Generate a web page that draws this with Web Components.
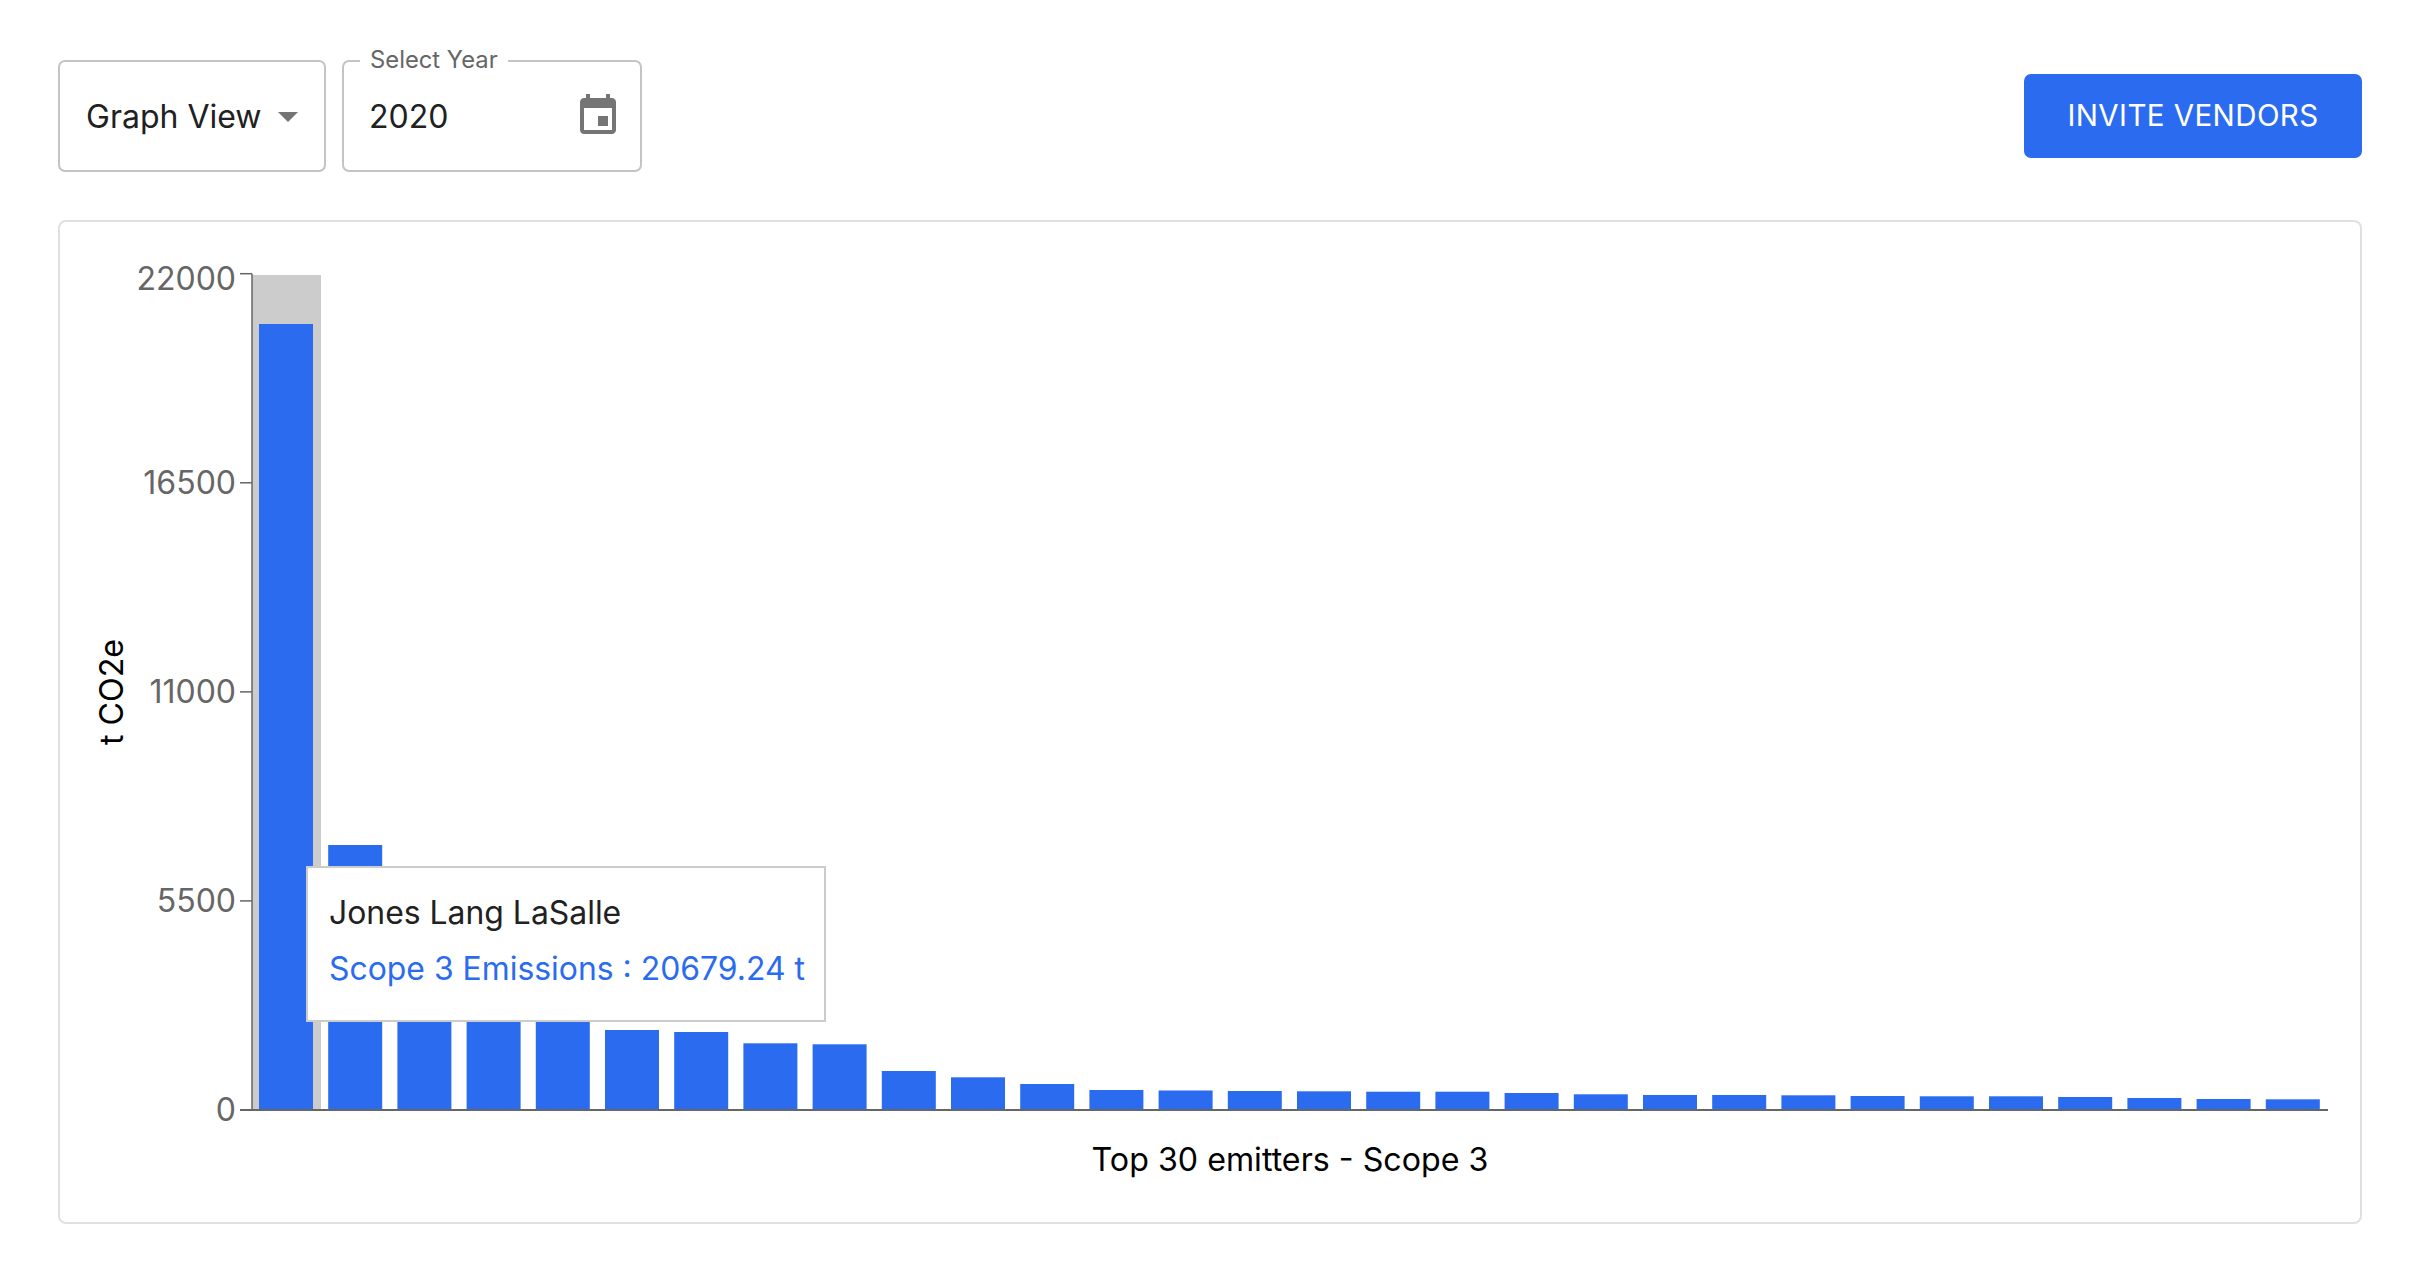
<!DOCTYPE html>
<html>
<head>
<meta charset="utf-8">
<title>Top 30 emitters</title>
<style>
  html, body { margin: 0; background: #fff; }
  body { font-family: "Inter", "Liberation Sans", sans-serif; color: #212121; }
</style>
</head>
<body>
<emitters-page></emitters-page>

<script>
class SelectField extends HTMLElement {
    constructor() {
        super();
        this.attachShadow({ mode: "open" });
    }

    connectedCallback() {
        this.shadowRoot.innerHTML = `
        <style>
            :host { display: block; width: 268px; height: 112px; box-sizing: border-box;
                border: 2px solid #c4c4c4; border-radius: 7px; }
            .row { height: 100%; display: flex; align-items: center; padding: 0 12px 0 26px; }
            .value { flex: 1; font-size: 32px; color: #212121; }
            svg { width: 48px; height: 48px; fill: #757575; display: block; }
        </style>
        <div class="row">
            <span class="value"><slot></slot></span>
            <svg viewBox="0 0 24 24"><path d="M7 10l5 5 5-5z"/></svg>
        </div>
        `;
    }
}

class DateField extends HTMLElement {
    constructor() {
        super();
        this.attachShadow({ mode: "open" });
    }

    connectedCallback() {
        const label = this.getAttribute("label");
        this.shadowRoot.innerHTML = `
        <style>
            :host { display: block; position: relative; width: 300px; height: 112px; box-sizing: border-box;
                border: 2px solid #c4c4c4; border-radius: 7px; }
            .label { position: absolute; left: 16px; top: -16px; padding: 0 10px; background: #fff;
                font-size: 23.8px; line-height: 28px; color: #666; white-space: nowrap; }
            .row { height: 100%; display: flex; align-items: center; padding: 0 18px 0 25px; }
            .value { flex: 1; font-size: 32px; color: #212121; }
            svg { width: 48px; height: 48px; fill: #757575; display: block; }
        </style>
        <span class="label">${label}</span>
        <div class="row">
            <span class="value"><slot></slot></span>
            <svg viewBox="0 0 24 24"><path d="M17 12h-5v5h5v-5zM16 1v2H8V1H6v2H5c-1.11 0-1.99.9-1.99 2L3 19c0 1.1.89 2 2 2h14c1.1 0 2-.9 2-2V5c0-1.1-.9-2-2-2h-1V1h-2zm3 18H5V8h14v11z"/></svg>
        </div>
        `;
    }
}

class ActionButton extends HTMLElement {
    constructor() {
        super();
        this.attachShadow({ mode: "open" });
    }

    connectedCallback() {
        this.shadowRoot.innerHTML = `
        <style>
            :host { display: flex; align-items: center; justify-content: center; width: 338px; height: 84px;
                background: #2b6bef; border-radius: 7px; color: #fff; font-size: 29.5px; letter-spacing: 0.4px; }
            span { position: relative; top: -1px; }
        </style>
        <span><slot></slot></span>
        `;
    }
}

class ChartTooltip extends HTMLElement {
    constructor() {
        super();
        this.attachShadow({ mode: "open" });
    }

    connectedCallback() {
        const name = this.getAttribute("name");
        const value = this.getAttribute("value");
        this.shadowRoot.innerHTML = `
        <style>
            :host { position: absolute; left: 246px; top: 644px; width: 520px; height: 156px; box-sizing: border-box;
                display: flex; flex-direction: column; gap: 20px;
                padding: 27px 21px 0; background: #fff; border: 2px solid #ccc; font-size: 31.9px; line-height: 36px; }
            .name { color: #212121; }
            .value { color: #2b6bef; white-space: nowrap; }
        </style>
        <div class="name">${name}</div>
        <div class="value">${value}</div>
        `;
    }
}

class BarChart extends HTMLElement {
    constructor() {
        super();
        this.attachShadow({ mode: "open" });
    }

    connectedCallback() {
        // tops of the 30 bars, in page pixels
        const tops = [324, 845, 965, 990, 1012, 1030, 1032, 1043.3, 1044.3, 1071, 1077.3, 1084, 1090, 1090.5, 1091,
            1091.3, 1091.7, 1091.7, 1093, 1094.3, 1095, 1095, 1095.3, 1096, 1096.3, 1096.3, 1097, 1098, 1099, 1099.3];
        const bottom = 1109.5;
        const step = 69.2;

        const bars = tops.map((top, i) => {
            const x = 259 + i * step;
            return `<rect x="${x}" y="${top}" width="54" height="${bottom - top}" fill="#2b6bef"/>`;
        }).join("");

        // first and last labels sit a little inside their ticks
        const ticks = [[22000, 273.7, 16], [16500, 482.8, 11.5], [11000, 691.9, 11.5], [5500, 900.9, 11.5], [0, 1110, 11]].map(([v, y, dy]) => `
            <line x1="240" x2="252" y1="${y}" y2="${y}" stroke="#666" stroke-width="1.5"/>
            <text x="236" y="${y + dy}" text-anchor="end" class="tick">${v}</text>`).join("");

        this.shadowRoot.innerHTML = `
        <style>
            :host { display: block; width: 100%; height: 100%; }
            svg { display: block; width: 100%; height: 100%; }
            text { font-family: "Inter", "Liberation Sans", sans-serif; }
            .tick { font-size: 32px; fill: #666; }
            .label { font-size: 32.2px; fill: #000; }
        </style>
        <svg viewBox="60 222 2300 1000">
            <rect x="252" y="275" width="69" height="835" fill="#ccc"/>
            ${bars}
            <line x1="252" x2="252" y1="273.7" y2="1110" stroke="#666" stroke-width="1.5"/>
            <line x1="240" x2="2328" y1="1110" y2="1110" stroke="#666" stroke-width="2"/>
            ${ticks}
            <text class="label" text-anchor="middle" transform="translate(123 692) rotate(-90)">t CO2e</text>
            <text class="label" x="1290" y="1171" text-anchor="middle">Top 30 emitters - Scope 3</text>
        </svg>
        `;
    }
}

class ChartCard extends HTMLElement {
    constructor() {
        super();
        this.attachShadow({ mode: "open" });
    }

    connectedCallback() {
        this.shadowRoot.innerHTML = `
        <style>
            :host { display: block; position: relative; height: 1004px; box-sizing: border-box;
                border: 2px solid #e0e0e0; border-radius: 8px; background: #fff; }
        </style>
        <slot></slot>
        `;
    }
}

class EmittersPage extends HTMLElement {
    constructor() {
        super();
        this.attachShadow({ mode: "open" });
    }

    connectedCallback() {
        this.shadowRoot.innerHTML = `
        <style>
            :host { display: flex; flex-direction: column; gap: 48px; padding: 60px 68px 0 58px; }
            .toolbar { display: flex; align-items: center; gap: 16px; }
            .spacer { flex: 1; }
        </style>
        <div class="toolbar">
            <select-field>Graph View</select-field>
            <date-field label="Select Year">2020</date-field>
            <div class="spacer"></div>
            <action-button>INVITE VENDORS</action-button>
        </div>
        <chart-card>
            <bar-chart></bar-chart>
            <chart-tooltip name="Jones Lang LaSalle" value="Scope 3 Emissions : 20679.24 t"></chart-tooltip>
        </chart-card>
        `;
    }
}

customElements.define("select-field", SelectField);
customElements.define("date-field", DateField);
customElements.define("action-button", ActionButton);
customElements.define("chart-tooltip", ChartTooltip);
customElements.define("bar-chart", BarChart);
customElements.define("chart-card", ChartCard);
customElements.define("emitters-page", EmittersPage);
</script>
</body>
</html>
